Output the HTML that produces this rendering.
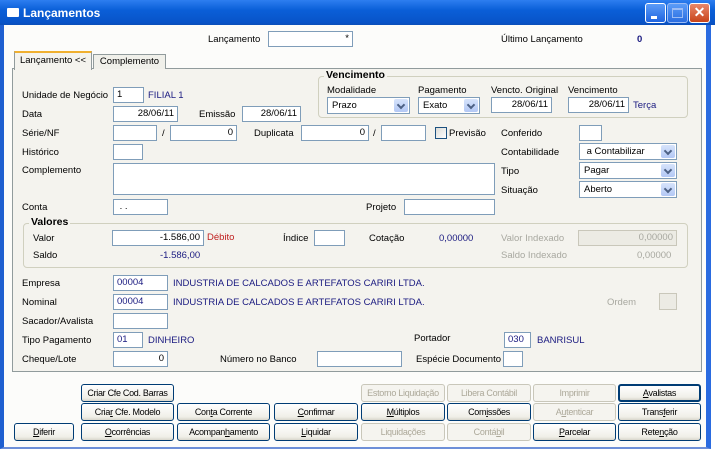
<!DOCTYPE html>
<html><head><meta charset="utf-8"><style>
*{box-sizing:border-box;margin:0;padding:0}
body{width:715px;height:455px;background:#fff;font-family:"Liberation Sans",sans-serif;font-size:9.5px;color:#000;position:relative;overflow:hidden}
.a{position:absolute;white-space:nowrap}
.in{position:absolute;background:#fff;border:1px solid #7f9db9;height:16px;font-size:9.5px;line-height:14px;padding:0 3px;white-space:nowrap}
.r{text-align:right}
.b{color:#1a1a80}
.g{color:#a8a8a0}
.sel{position:absolute;background:#fff;border:1px solid #7f9db9;height:17px;font-size:9.5px;line-height:15px;padding-left:4px;white-space:nowrap}
.sel i{position:absolute;right:1px;top:1px;width:14px;height:13px;background:linear-gradient(#d6e3fb,#b3c8f5);border-radius:2px}
.sel i:after{content:"";position:absolute;left:4px;top:3px;width:4px;height:4px;border-right:2px solid #4d6185;border-bottom:2px solid #4d6185;transform:rotate(45deg)}
.btn{position:absolute;height:18px;border:1px solid #003c74;border-radius:3px;background:linear-gradient(#fff,#f0efe8 80%,#d8d6cc);font-size:9px;letter-spacing:-0.3px;line-height:16px;text-align:center;white-space:nowrap;overflow:hidden}
.dis{border-color:#c9c7ba;color:#aca899;background:#f5f4ef}
.grp{position:absolute;border:1px solid #d0d0bf;border-radius:4px}
</style></head><body>
<div class="a" style="left:0;top:0;width:715px;height:25px;background:linear-gradient(#2d7ef0,#0a5fd8 40%,#0853c8 90%,#0b4fb8);"></div>
<div class="a" style="left:7px;top:8px;width:12px;height:9px;background:#fff;border-radius:1px"></div>
<div class="a" style="left:23px;top:6px;color:#fff;font-weight:bold;font-size:12px">Lançamentos</div>
<div class="a" style="left:645px;top:3px;width:21px;height:20px;border:1px solid #fff;border-radius:3px;background:linear-gradient(#5b9cf8,#1f64e0)"><div class="a" style="left:5px;top:12px;width:6px;height:3px;background:#fff"></div></div>
<div class="a" style="left:667px;top:3px;width:21px;height:20px;border:1px solid #9bbcf5;border-radius:3px;background:linear-gradient(#5b9cf8,#2a6de0)"><div class="a" style="left:4px;top:4px;width:11px;height:10px;border:1px solid #9bbcf5;border-top-width:2px"></div></div>
<div class="a" style="left:689px;top:3px;width:21px;height:20px;border:1px solid #fff;border-radius:3px;background:linear-gradient(#e8876a,#c8441a);color:#fff;font-weight:bold;font-size:14px;line-height:17px;text-align:center">✕</div>
<div class="a" style="left:0;top:25px;width:711px;height:424px;background:#fcfcfa;border-left:4px solid #1f5fd0;border-right:5px solid #2a6be0;border-bottom:2px solid #6d8fd8"></div>

<div class="a" style="left:208px;top:34px">Lançamento</div>
<div class="in r" style="left:268px;top:31px;width:85px">*</div>
<div class="a" style="left:501px;top:34px">Último Lançamento</div>
<div class="a b" style="left:637px;top:34px;font-weight:bold">0</div>

<div class="a" style="left:12px;top:68px;width:690px;height:304px;background:#f4f3ee;border:1px solid #919b9c"></div>
<div class="a" style="left:93px;top:54px;width:73px;height:15px;background:#f0f0ea;border:1px solid #919b9c;border-bottom:none;text-align:center;line-height:14px">Complemento</div>
<div class="a" style="left:14px;top:51px;width:78px;height:19px;background:#f4f3ee;border:1px solid #919b9c;border-top:2px solid #f0b030;border-bottom:none;text-align:center;line-height:15px">Lançamento &lt;&lt;</div>

<div class="grp" style="left:318px;top:76px;width:370px;height:42px"></div>
<div class="a" style="left:324px;top:69px;background:#f4f3ee;padding:0 2px;font-weight:bold;font-size:10.5px">Vencimento</div>
<div class="a" style="left:327px;top:85px">Modalidade</div>
<div class="sel" style="left:327px;top:97px;width:83px">Prazo<i></i></div>
<div class="a" style="left:418px;top:85px">Pagamento</div>
<div class="sel" style="left:418px;top:97px;width:62px">Exato<i></i></div>
<div class="a" style="left:491px;top:85px">Vencto. Original</div>
<div class="in r" style="left:491px;top:97px;width:61px">28/06/11</div>
<div class="a" style="left:568px;top:85px">Vencimento</div>
<div class="in r" style="left:568px;top:97px;width:61px">28/06/11</div>
<div class="a b" style="left:633px;top:100px">Terça</div>

<div class="a" style="left:22px;top:90px">Unidade de Negócio</div>
<div class="in" style="left:113px;top:87px;width:31px">1</div>
<div class="a b" style="left:148px;top:90px">FILIAL 1</div>
<div class="a" style="left:22px;top:109px">Data</div>
<div class="in r" style="left:113px;top:106px;width:65px">28/06/11</div>
<div class="a" style="left:199px;top:109px">Emissão</div>
<div class="in r" style="left:242px;top:106px;width:59px">28/06/11</div>

<div class="a" style="left:22px;top:128px">Série/NF</div>
<div class="in" style="left:113px;top:125px;width:44px"></div>
<div class="a" style="left:162px;top:128px">/</div>
<div class="in r" style="left:170px;top:125px;width:67px">0</div>
<div class="a" style="left:254px;top:128px">Duplicata</div>
<div class="in r" style="left:301px;top:125px;width:68px">0</div>
<div class="a" style="left:373px;top:128px">/</div>
<div class="in" style="left:381px;top:125px;width:45px"></div>
<div class="a" style="left:435px;top:127px;width:12px;height:12px;border:1px solid #1c5180;background:linear-gradient(135deg,#dcdcd7,#fff)"></div>
<div class="a" style="left:449px;top:128px">Previsão</div>
<div class="a" style="left:501px;top:128px">Conferido</div>
<div class="in" style="left:579px;top:125px;width:23px"></div>

<div class="a" style="left:22px;top:147px">Histórico</div>
<div class="in" style="left:113px;top:144px;width:30px"></div>
<div class="a" style="left:501px;top:147px">Contabilidade</div>
<div class="sel" style="left:579px;top:143px;width:98px">&nbsp;a Contabilizar<i></i></div>
<div class="a" style="left:22px;top:165px">Complemento</div>
<div class="in" style="left:113px;top:163px;width:382px;height:32px"></div>
<div class="a" style="left:501px;top:166px">Tipo</div>
<div class="sel" style="left:579px;top:162px;width:98px">Pagar<i></i></div>
<div class="a" style="left:501px;top:185px">Situação</div>
<div class="sel" style="left:579px;top:181px;width:98px">Aberto<i></i></div>
<div class="a" style="left:22px;top:202px">Conta</div>
<div class="in" style="left:113px;top:199px;width:55px">&nbsp;. .</div>
<div class="a" style="left:366px;top:202px">Projeto</div>
<div class="in" style="left:404px;top:199px;width:91px"></div>

<div class="grp" style="left:23px;top:223px;width:665px;height:45px"></div>
<div class="a" style="left:29px;top:216px;background:#f4f3ee;padding:0 2px;font-weight:bold;font-size:10.5px">Valores</div>
<div class="a" style="left:33px;top:233px">Valor</div>
<div class="in r" style="left:112px;top:230px;width:92px">-1.586,00</div>
<div class="a" style="left:207px;top:232px;color:#c02020">Débito</div>
<div class="a" style="left:283px;top:233px">Índice</div>
<div class="in" style="left:314px;top:230px;width:31px"></div>
<div class="a" style="left:369px;top:233px">Cotação</div>
<div class="a b" style="left:439px;top:233px">0,00000</div>
<div class="a g" style="left:501px;top:233px">Valor Indexado</div>
<div class="in r g" style="left:578px;top:230px;width:99px;background:#ecebe4;border-color:#c9c7ba">0,00000</div>
<div class="a" style="left:33px;top:250px">Saldo</div>
<div class="a b" style="left:160px;top:250px">-1.586,00</div>
<div class="a g" style="left:501px;top:250px">Saldo Indexado</div>
<div class="a g" style="left:637px;top:250px">0,00000</div>

<div class="a" style="left:22px;top:278px">Empresa</div>
<div class="in b" style="left:113px;top:275px;width:55px">00004</div>
<div class="a b" style="left:173px;top:278px">INDUSTRIA DE CALCADOS E ARTEFATOS CARIRI LTDA.</div>
<div class="a" style="left:22px;top:297px">Nominal</div>
<div class="in b" style="left:113px;top:294px;width:55px">00004</div>
<div class="a b" style="left:173px;top:297px">INDUSTRIA DE CALCADOS E ARTEFATOS CARIRI LTDA.</div>
<div class="a g" style="left:607px;top:297px">Ordem</div>
<div class="a" style="left:659px;top:293px;width:18px;height:17px;border:1px solid #c9c7ba;background:#ecebe4"></div>
<div class="a" style="left:22px;top:316px">Sacador/Avalista</div>
<div class="in" style="left:113px;top:313px;width:55px"></div>
<div class="a" style="left:22px;top:335px">Tipo Pagamento</div>
<div class="in b" style="left:113px;top:332px;width:30px">01</div>
<div class="a b" style="left:148px;top:335px">DINHEIRO</div>
<div class="a" style="left:414px;top:333px">Portador</div>
<div class="in b" style="left:504px;top:332px;width:27px">030</div>
<div class="a b" style="left:537px;top:335px">BANRISUL</div>
<div class="a" style="left:22px;top:354px">Cheque/Lote</div>
<div class="in r" style="left:113px;top:351px;width:55px">0</div>
<div class="a" style="left:220px;top:354px">Número no Banco</div>
<div class="in" style="left:317px;top:351px;width:85px"></div>
<div class="a" style="left:416px;top:354px">Espécie Documento</div>
<div class="in" style="left:503px;top:351px;width:20px"></div>

<div class="btn" style="left:81px;top:384px;width:93px">Criar Cfe Cod. Barras</div>
<div class="btn dis" style="left:361px;top:384px;width:84px">Estorno Liquidação</div>
<div class="btn dis" style="left:447px;top:384px;width:84px">Libera Contábil</div>
<div class="btn dis" style="left:533px;top:384px;width:83px">Imprimir</div>
<div class="btn" style="left:618px;top:384px;width:83px;border-width:2px;line-height:14px"><u>A</u>valistas</div>

<div class="btn" style="left:81px;top:403px;width:93px">Cria<u>r</u> Cfe. Modelo</div>
<div class="btn" style="left:177px;top:403px;width:93px">Con<u>t</u>a Corrente</div>
<div class="btn" style="left:274px;top:403px;width:84px"><u>C</u>onfirmar</div>
<div class="btn" style="left:361px;top:403px;width:84px"><u>M</u>últiplos</div>
<div class="btn" style="left:447px;top:403px;width:84px">Com<u>i</u>ssões</div>
<div class="btn dis" style="left:533px;top:403px;width:83px">A<u>u</u>tenticar</div>
<div class="btn" style="left:618px;top:403px;width:83px">Trans<u>f</u>erir</div>

<div class="btn" style="left:14px;top:423px;width:60px"><u>D</u>iferir</div>
<div class="btn" style="left:81px;top:423px;width:93px"><u>O</u>corrências</div>
<div class="btn" style="left:177px;top:423px;width:93px">Acompan<u>h</u>amento</div>
<div class="btn" style="left:274px;top:423px;width:84px"><u>L</u>iquidar</div>
<div class="btn dis" style="left:361px;top:423px;width:84px">Liquidações</div>
<div class="btn dis" style="left:447px;top:423px;width:84px">Contá<u>b</u>il</div>
<div class="btn" style="left:533px;top:423px;width:83px"><u>P</u>arcelar</div>
<div class="btn" style="left:618px;top:423px;width:83px">Rete<u>n</u>ção</div>
</body></html>
